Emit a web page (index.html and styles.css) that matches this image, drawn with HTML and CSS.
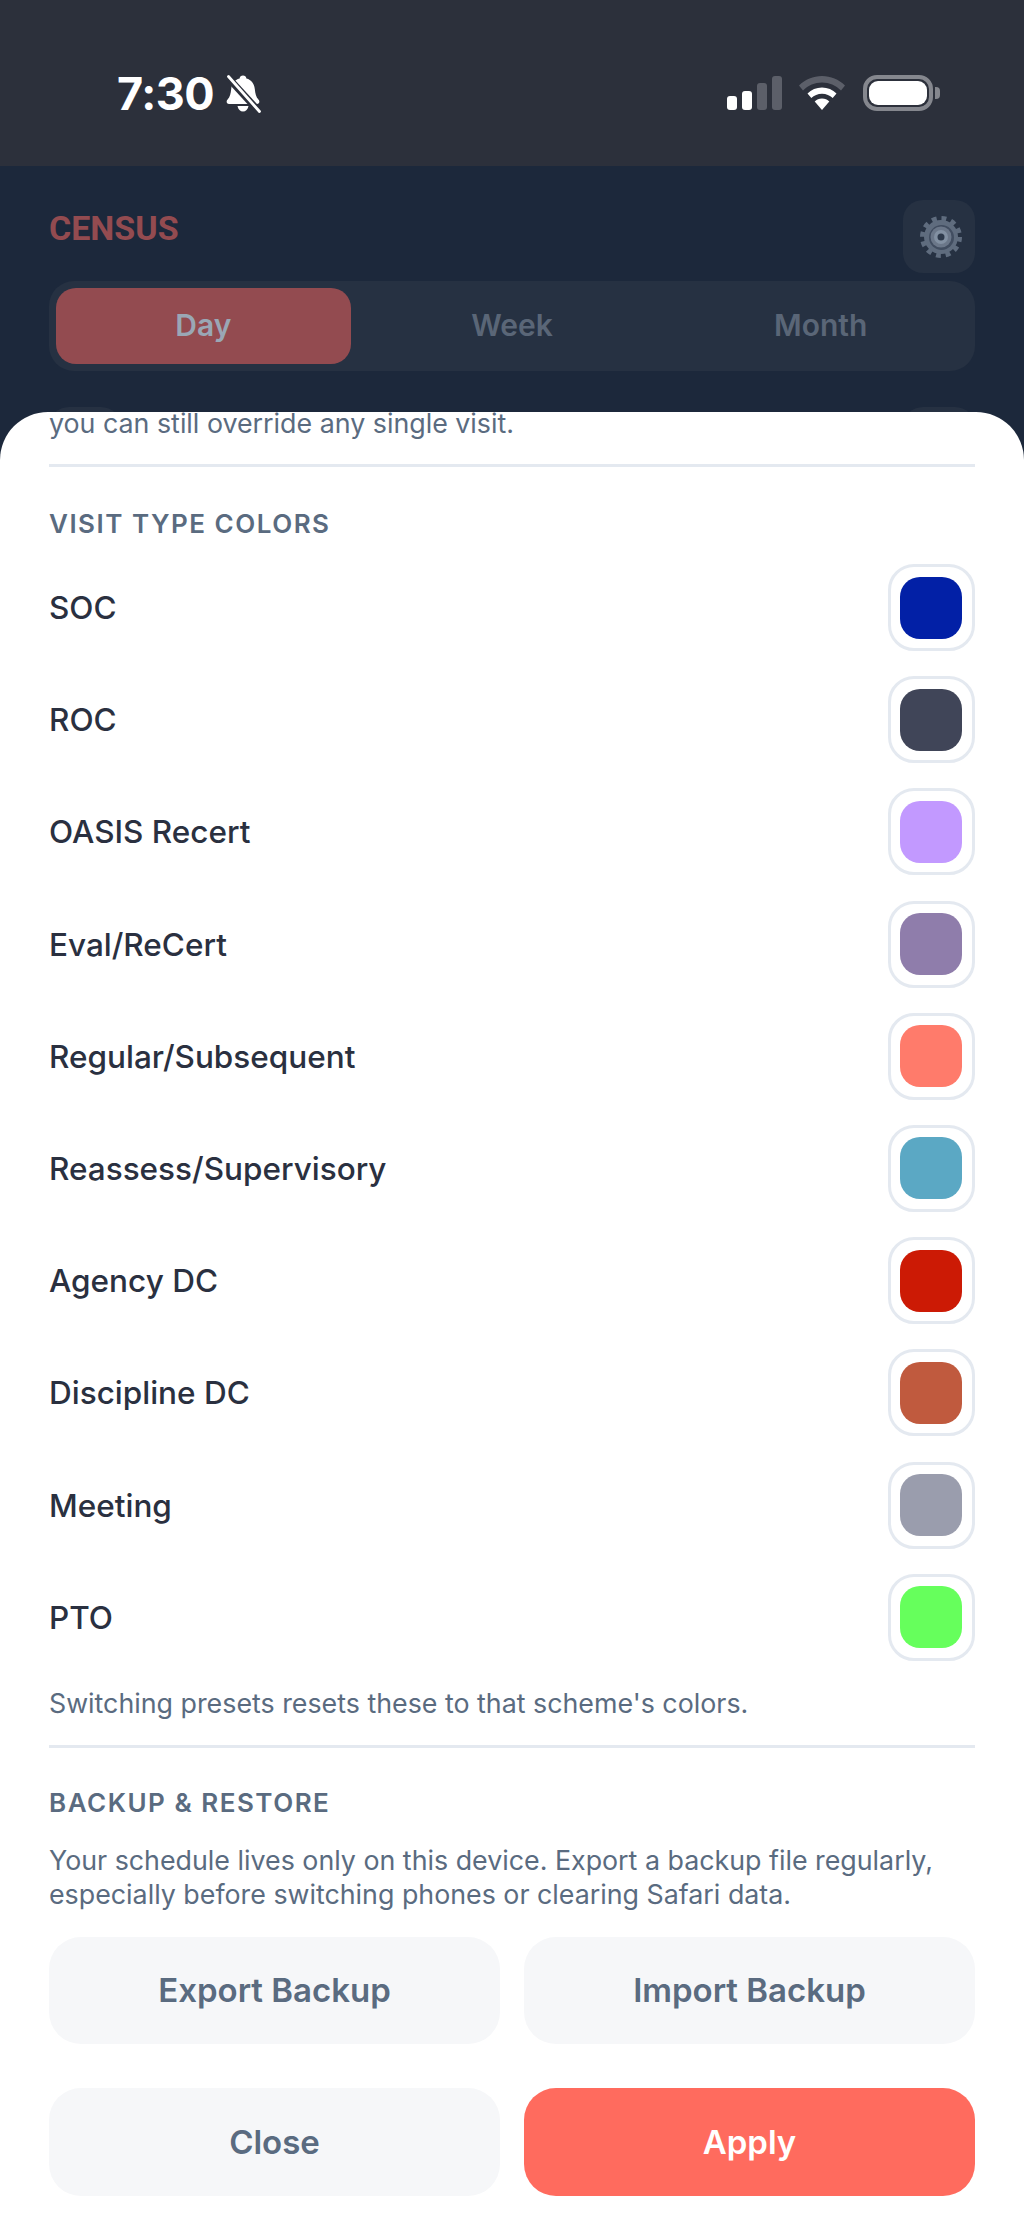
FILE: index.html
```html
<!DOCTYPE html>
<html lang="en">
<head>
<meta charset="utf-8">
<title>Census settings</title>
<link rel="stylesheet" href="styles.css">
</head>
<body>
<div class="phone">
  <header class="statusbar">
    <div class="status-left">
      <span class="time">7:30</span>
      <svg class="bell" viewBox="0 0 35 38" aria-hidden="true">
        <path fill="#fff" d="M17.5 0.5c1.9 0 3.2 1.3 3.4 3 5 1.300 7.800 5.300 8.400 10.500.5 4.500 1.200 8 3.600 10.500 1.600 1.700 1.300 4.500-1.500 4.500H3.600c-2.800 0-3.100-2.800-1.500-4.500 2.400-2.500 3.100-6 3.600-10.500.6-5.200 3.400-9.200 8.400-10.500.2-1.700 1.500-3 3.400-3z"/>
        <path fill="#fff" d="M12 31h11c-.5 3.500-2.800 5.500-5.500 5.500S12.500 34.500 12 31z"/>
        <path stroke="#2c303b" stroke-width="7" d="M1 1l33 36"/>
        <path stroke="#fff" stroke-width="2.800" stroke-linecap="round" d="M3 1.500l31 35"/>
      </svg>
    </div>
    <div class="status-right">
      <div class="signal">
        <i class="bar bar-1"></i><i class="bar bar-2"></i><i class="bar bar-3"></i><i class="bar bar-4"></i>
      </div>
      <svg class="wifi" viewBox="0 0 46 34" aria-hidden="true">
        <path fill="#5c5f69" d="M23 0c8.800 0 16.700 3.500 23 9.500l-4 5C36.800 9.400 30.300 6.500 23 6.500S9.200 9.400 4 14.500l-4-5C6.300 3.500 14.200 0 23 0z"/>
        <path fill="#fff" d="M23 11.500c5.600 0 10.700 2.200 14.500 5.900l-3.800 4.700c-2.800-2.700-6.500-4.300-10.700-4.300s-7.900 1.600-10.700 4.300l-3.800-4.700c3.800-3.700 8.900-5.900 14.500-5.900z"/>
        <path fill="#fff" d="M23 22.500c2.900 0 5.500 1.100 7.300 2.900L23 34l-7.300-8.600c1.800-1.800 4.400-2.900 7.300-2.900z"/>
      </svg>
      <div class="battery">
        <div class="battery-shell"><div class="battery-fill"></div></div>
        <div class="battery-cap"></div>
      </div>
    </div>
  </header>

  <main class="app">
    <div class="app-top">
      <h1 class="brand">CENSUS</h1>
      <button class="gear-btn" aria-label="Settings">
        <svg class="gear" viewBox="0 0 44 44" aria-hidden="true">
          <circle cx="22" cy="22" r="18.500" fill="none" stroke="#5f6c7e" stroke-width="5" stroke-dasharray="4.840 4.840"/>
          <circle cx="22" cy="22" r="17" fill="#5f6c7e"/>
          <circle cx="22.500" cy="22.500" r="12.500" fill="#414d60"/>
          <circle cx="22" cy="22" r="10.500" fill="#6b7789"/>
          <circle cx="22" cy="22" r="7" fill="#8290a2"/>
          <circle cx="22" cy="22" r="3.500" fill="#2d394b"/>
        </svg>
      </button>
    </div>
    <div class="segments">
      <div class="segment is-active">Day</div>
      <div class="segment">Week</div>
      <div class="segment">Month</div>
    </div>
    <div class="date-nav"><i class="nav-btn"></i><i class="nav-btn"></i></div>
  </main>

  <section class="sheet">
    <p class="hint hint-top">you can still override any single visit.</p>
    <hr class="rule">
    <h2 class="section-title">VISIT TYPE COLORS</h2>
    <ul class="types">
      <li class="type"><span>SOC</span><span class="swatch"><i class="c-soc"></i></span></li>
      <li class="type"><span>ROC</span><span class="swatch"><i class="c-roc"></i></span></li>
      <li class="type"><span>OASIS Recert</span><span class="swatch"><i class="c-oasis"></i></span></li>
      <li class="type"><span>Eval/ReCert</span><span class="swatch"><i class="c-eval"></i></span></li>
      <li class="type"><span>Regular/Subsequent</span><span class="swatch"><i class="c-regular"></i></span></li>
      <li class="type"><span>Reassess/Supervisory</span><span class="swatch"><i class="c-reassess"></i></span></li>
      <li class="type"><span>Agency DC</span><span class="swatch"><i class="c-agency"></i></span></li>
      <li class="type"><span>Discipline DC</span><span class="swatch"><i class="c-discipline"></i></span></li>
      <li class="type"><span>Meeting</span><span class="swatch"><i class="c-meeting"></i></span></li>
      <li class="type"><span>PTO</span><span class="swatch"><i class="c-pto"></i></span></li>
    </ul>
    <p class="hint hint-presets">Switching presets resets these to that scheme's colors.</p>
    <hr class="rule rule-backup">
    <h2 class="section-title section-backup">BACKUP &amp; RESTORE</h2>
    <p class="hint hint-backup">Your schedule lives only on this device. Export a backup file regularly, especially before switching phones or clearing Safari data.</p>
    <div class="actions actions-backup">
      <button class="btn">Export Backup</button>
      <button class="btn">Import Backup</button>
    </div>
    <div class="actions actions-main">
      <button class="btn">Close</button>
      <button class="btn btn-primary">Apply</button>
    </div>
  </section>
</div>
</body>
</html>
```
FILE: styles.css
```css
* { box-sizing: border-box; }
html, body { margin: 0; padding: 0; }
body { font-family: Inter, "Liberation Sans", sans-serif; background: #1c283b; }
.phone { position: relative; width: 1024px; height: 2224px; overflow: hidden; background: #1c283b; }

.statusbar { height: 166px; background: #2c303b; display: flex; justify-content: space-between; padding: 75px 84px 0 117px; align-items: flex-start; }
.status-left { display: flex; align-items: flex-start; gap: 11px; }
.time { font-size: 45px; line-height: 38px; font-weight: 700; color: #fff; letter-spacing: -0.5px; }
.bell { width: 36px; height: 38px; display: block; }
.status-right { display: flex; align-items: flex-start; }
.signal { display: flex; align-items: flex-end; gap: 5px; height: 34px; margin-top: 1px; }
.bar { display: block; width: 10px; border-radius: 3px; background: #fff; }
.bar-1 { height: 14px; }
.bar-2 { height: 19px; }
.bar-3 { height: 27px; background: #5c5f69; }
.bar-4 { height: 34px; background: #5c5f69; }
.wifi { width: 46px; height: 34px; margin: 1px 18px 0 17px; display: block; }
.battery { display: flex; align-items: center; gap: 2px; height: 36px; }
.battery-shell { width: 70px; height: 36px; border: 4px solid #85878e; border-radius: 14px; padding: 2px; }
.battery-fill { width: 100%; height: 100%; background: #fff; border-radius: 9px; }
.battery-cap { width: 5px; height: 12px; background: #85878e; border-radius: 0 4px 4px 0; }

.app { padding: 34px 49px 0; }
.app-top { display: flex; justify-content: space-between; align-items: flex-start; height: 81px; }
.brand { margin: 8px 0 0 0; font-family: Roboto, Inter, sans-serif; font-size: 34px; line-height: 40px; font-weight: 700; color: #934b50; }
.gear-btn { width: 72px; height: 73px; border: 0; padding: 0 0 0 4px; border-radius: 20px; background: #263142; display: flex; align-items: center; justify-content: center; }
.gear { width: 44px; height: 44px; display: block; }
.segments { height: 90px; background: #263142; border-radius: 25px; padding: 7px; display: grid; grid-template-columns: repeat(3, 1fr); gap: 14px; }
.segment { display: flex; align-items: center; justify-content: center; border-radius: 20px; font-size: 30px; line-height: 72px; font-weight: 600; color: #5a6677; padding-bottom: 2px; }
.segment.is-active { background: #934b50; color: #9aa7b5; }
.date-nav { display: flex; justify-content: space-between; margin-top: 36px; }
.nav-btn { display: block; width: 72px; height: 72px; border-radius: 20px; background: #263142; }

.sheet { position: absolute; left: 0; right: 0; top: 412px; bottom: 0; background: #fff; border-radius: 48px 48px 0 0; padding: 0 49px; overflow: hidden; }
.hint { margin: 0; font-size: 26.800px; line-height: 34px; color: #5a6b80; }
.hint-top { margin-top: -6px; }
.rule { margin: 24px 0 0; border: 0; height: 3px; background: #e4e9f0; }
.rule-backup { margin-top: 25px; }
.section-title { margin: 41px 0 0; font-size: 26px; line-height: 32px; font-weight: 600; letter-spacing: 1.500px; color: #5a6b80; }
.types { list-style: none; margin: 24px 0 0; padding: 0; display: grid; gap: 25.200px; }
.type { height: 87px; display: flex; align-items: center; justify-content: space-between; font-size: 31.500px; font-weight: 450; color: #2a3040; }
.swatch { width: 87.500px; height: 87px; border: 3.500px solid #e4e9f0; border-radius: 26px; display: flex; align-items: center; justify-content: center; background: #fff; }
.swatch i { display: block; width: 62px; height: 62px; border-radius: 20px; }
.c-soc { background: #0220a6; }
.c-roc { background: #404558; }
.c-oasis { background: #c299ff; }
.c-eval { background: #8f7dab; }
.c-regular { background: #ff7b6b; }
.c-reassess { background: #5ba8c4; }
.c-agency { background: #cc1a05; }
.c-discipline { background: #c05a3e; }
.c-meeting { background: #9a9dad; }
.c-pto { background: #66ff5c; }
.hint-presets { margin-top: 25px; }
.section-backup { margin-top: 39px; }
.hint-backup { margin-top: 24px; }
.actions { display: grid; grid-template-columns: 1fr 1fr; gap: 24px; }
.actions-backup { margin-top: 26px; }
.actions-main { margin-top: 44px; }
.btn { height: 107.500px; border: 0; border-radius: 32px; background: #f6f7f9; color: #5a6b80; font-family: inherit; font-size: 33px; font-weight: 600; }
.btn-primary { background: #ff6b5e; color: #fff; }
```
